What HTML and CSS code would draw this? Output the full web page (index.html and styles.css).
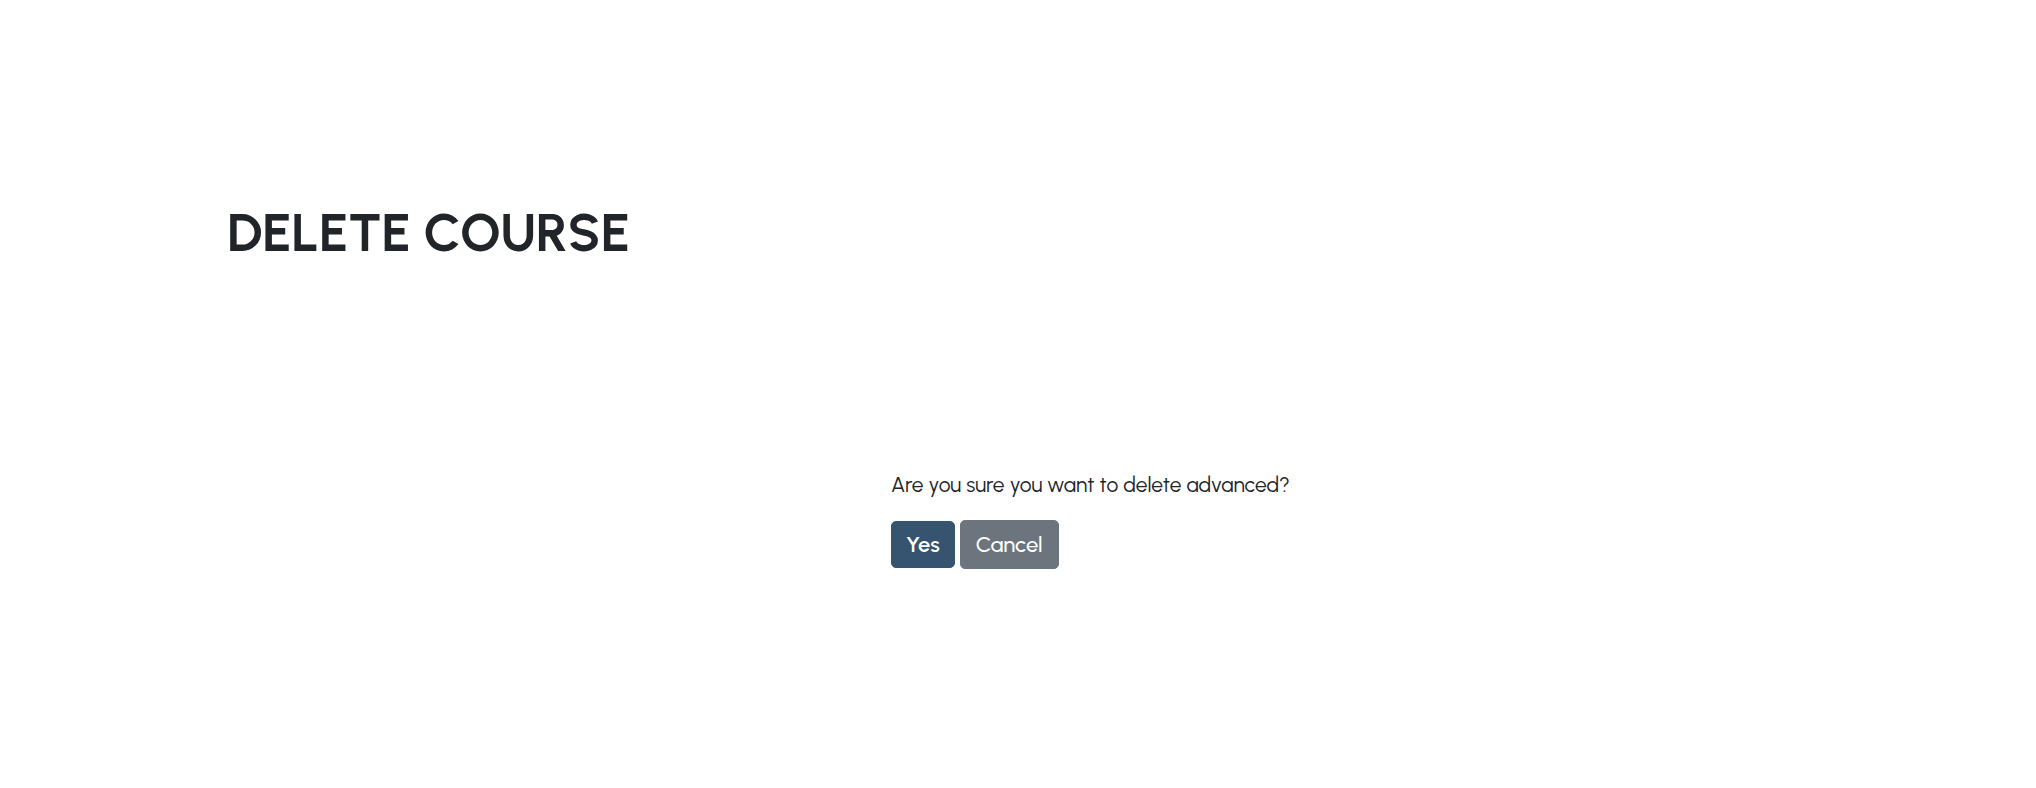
FILE: index.html
```html
<!DOCTYPE html>
<html lang="en">
<head>
<meta charset="utf-8">
<title>Delete Course</title>
<link rel="stylesheet" href="styles.css">
</head>
<body>
<main class="page">
  <header class="page-header">
    <h1 class="title">DELETE COURSE</h1>
  </header>
  <section class="confirm">
    <p class="question">Are you sure you want to delete advanced?</p>
    <form class="actions">
      <button type="button" class="btn btn-primary">Yes</button>
      <button type="button" class="btn btn-secondary">Cancel</button>
    </form>
  </section>
</main>
</body>
</html>
```
FILE: styles.css
```css
html, body {
  margin: 0;
  padding: 0;
  background: #ffffff;
}
body {
  font-family: "Urbanist", "Lato", "Noto Sans", sans-serif;
  color: #212529;
}
.page {
  display: flex;
  flex-direction: column;
  min-height: 788px;
}
.page-header {
  padding: 201px 0 0 227px;
}
.title {
  margin: 0;
  font-size: 53px;
  font-weight: 700;
  line-height: 1.2;
  color: #212529;
}
.confirm {
  padding: 204px 0 0 891px;
}
.question {
  margin: 0 0 20px;
  font-size: 21px;
  line-height: 1.5;
  font-weight: 400;
}
.actions {
  display: flex;
  gap: 5px;
  align-items: center;
}
.btn {
  font-family: inherit;
  font-size: 22px;
  font-weight: 600;
  color: #ffffff;
  border-radius: 5px;
  cursor: pointer;
  line-height: 1.5;
}
.btn-primary {
  background: #36536f;
  border: 1px solid #36536f;
  padding: 6px 14px;
}
.btn-secondary {
  background: #6c757d;
  border: 1px solid #6c757d;
  padding: 7px 15px;
  font-weight: 500;
}
```
